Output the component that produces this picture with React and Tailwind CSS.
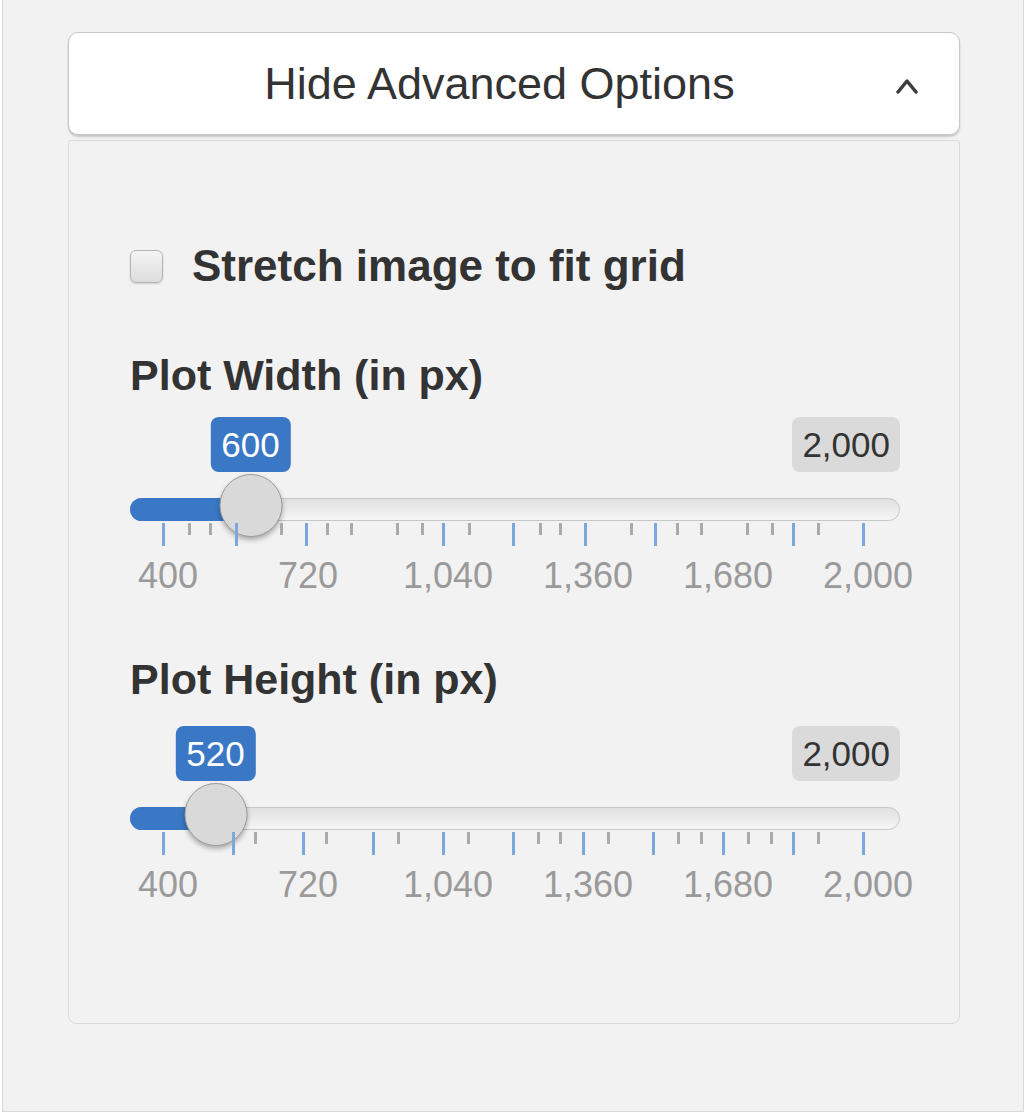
import React from 'react';

// tick offsets (px) measured from the first grid mark, grid spans 700px
const WIDTH_TICKS = {
  big: [0, 73, 143, 280, 350, 422, 492, 630, 700],
  small: [26, 47, 118, 164, 188, 234, 259, 306, 377, 397, 468, 514, 538, 584, 609, 655],
};

const HEIGHT_TICKS = {
  big: [0, 70, 140, 210, 280, 350, 420, 490, 560, 630, 700],
  small: [92, 163, 235, 305, 375, 397, 445, 515, 538, 585, 608, 655],
};

const LABELS = ['400', '720', '1,040', '1,360', '1,680', '2,000'];

const MIN = 400;
const MAX = 2000;
const GRID_LEFT = 33;
const GRID_SPAN = 700;

const Slider = ({ label, value, ticks, badgeGap = 'mt-[18px]' }) => {
  const x = GRID_LEFT + ((value - MIN) / (MAX - MIN)) * GRID_SPAN;

  return (
    <div className="flex flex-col">
      <div className="text-[43px] leading-[48px] font-bold text-[#333]">{label}</div>

      {/* value + max badges */}
      <div className={`relative flex h-[55px] w-[770px] justify-end ${badgeGap}`}>
        <div
          className="absolute top-0 h-[55px] -translate-x-1/2 rounded-[8px] bg-[#3a78c5] px-[11px] text-[35px] leading-[55px] text-white"
          style={{ left: x }}
        >
          {value}
        </div>
        <div className="rounded-[8px] bg-[#dadada] px-[10px] text-[35px] leading-[55px] text-[#333]">
          2,000
        </div>
      </div>

      {/* track with handle */}
      <div className="relative mt-[26px] h-[23px] w-[770px] rounded-full border border-[#c6c6c6] bg-gradient-to-b from-[#e0e0e0] to-[#f6f6f6]">
        <div
          className="absolute -left-px -top-px h-[23px] rounded-l-full bg-[#3a78c5]"
          style={{ width: x }}
        />
        <div
          className="absolute top-[-25px] h-[63px] w-[63px] -translate-x-1/2 rounded-full border border-[#9c9c9c] bg-[#d9d9d9] shadow-[0_3px_5px_rgba(0,0,0,0.3)]"
          style={{ left: x - 1 }}
        />
      </div>

      {/* grid ticks */}
      <div className="relative mt-[2px] h-[23px] w-[770px]">
        {ticks.big.map((t) => (
          <div
            key={`b${t}`}
            className="absolute top-0 h-[23px] w-[3px] bg-[#7aa7dc]"
            style={{ left: GRID_LEFT + t - 1 }}
          />
        ))}
        {ticks.small.map((t) => (
          <div
            key={`s${t}`}
            className="absolute top-0 h-[12px] w-[3px] bg-[#aaaaaa]"
            style={{ left: GRID_LEFT + t - 1 }}
          />
        ))}
      </div>

      {/* grid labels */}
      <div className="ml-[-32px] mt-[10px] flex">
        {LABELS.map((l) => (
          <div key={l} className="w-[140px] text-center text-[36px] leading-[40px] text-[#9a9a9a]">
            {l}
          </div>
        ))}
      </div>
    </div>
  );
};

export default function App() {
  return (
    <div className="h-[1115px] w-[1026px] bg-white font-['Liberation_Sans',Arial,sans-serif]">
      <div className="ml-[2px] h-[1112px] w-[1022px] border-b border-l border-r border-[#d9d9d9] bg-[#f2f2f2] pl-[65px] pt-[32px]">
        {/* toggle button */}
        <button
          type="button"
          className="flex h-[103px] w-[892px] items-center rounded-[10px] border border-[#c8c8c8] bg-white pl-[34px] pr-[41px] shadow-[0_2px_2px_rgba(0,0,0,0.18)]"
        >
          <span className="flex-1 text-center text-[45px] leading-[50px] text-[#333]">
            Hide Advanced Options
          </span>
          <svg width="22" height="16" viewBox="0 0 22 16" className="mt-[4px]">
            <polyline
              points="2,14 11,3 20,14"
              fill="none"
              stroke="#3c3c3c"
              strokeWidth="3.5"
              strokeLinecap="round"
              strokeLinejoin="round"
            />
          </svg>
        </button>

        {/* advanced panel */}
        <div className="mt-[5px] h-[884px] w-[892px] rounded-b-[8px] rounded-t-[3px] border border-[#dadada] bg-[#f2f2f2] pl-[61px] pt-[103px]">
          <label className="flex h-[44px] items-center">
            <span className="h-[33px] w-[33px] rounded-[6px] border border-[#b4b4b4] bg-gradient-to-b from-[#f4f4f4] to-[#dcdcdc] shadow-[0_1px_2px_rgba(0,0,0,0.15)]" />
            <span className="ml-[29px] text-[44px] font-bold leading-[48px] text-[#333]">
              Stretch image to fit grid
            </span>
          </label>

          <div className="mt-[63px]">
            <Slider label="Plot Width (in px)" value={600} ticks={WIDTH_TICKS} />
          </div>
          <div className="mt-[59px]">
            <Slider
              label="Plot Height (in px)"
              value={520}
              ticks={HEIGHT_TICKS}
              badgeGap="mt-[23px]"
            />
          </div>
        </div>
      </div>
    </div>
  );
}
